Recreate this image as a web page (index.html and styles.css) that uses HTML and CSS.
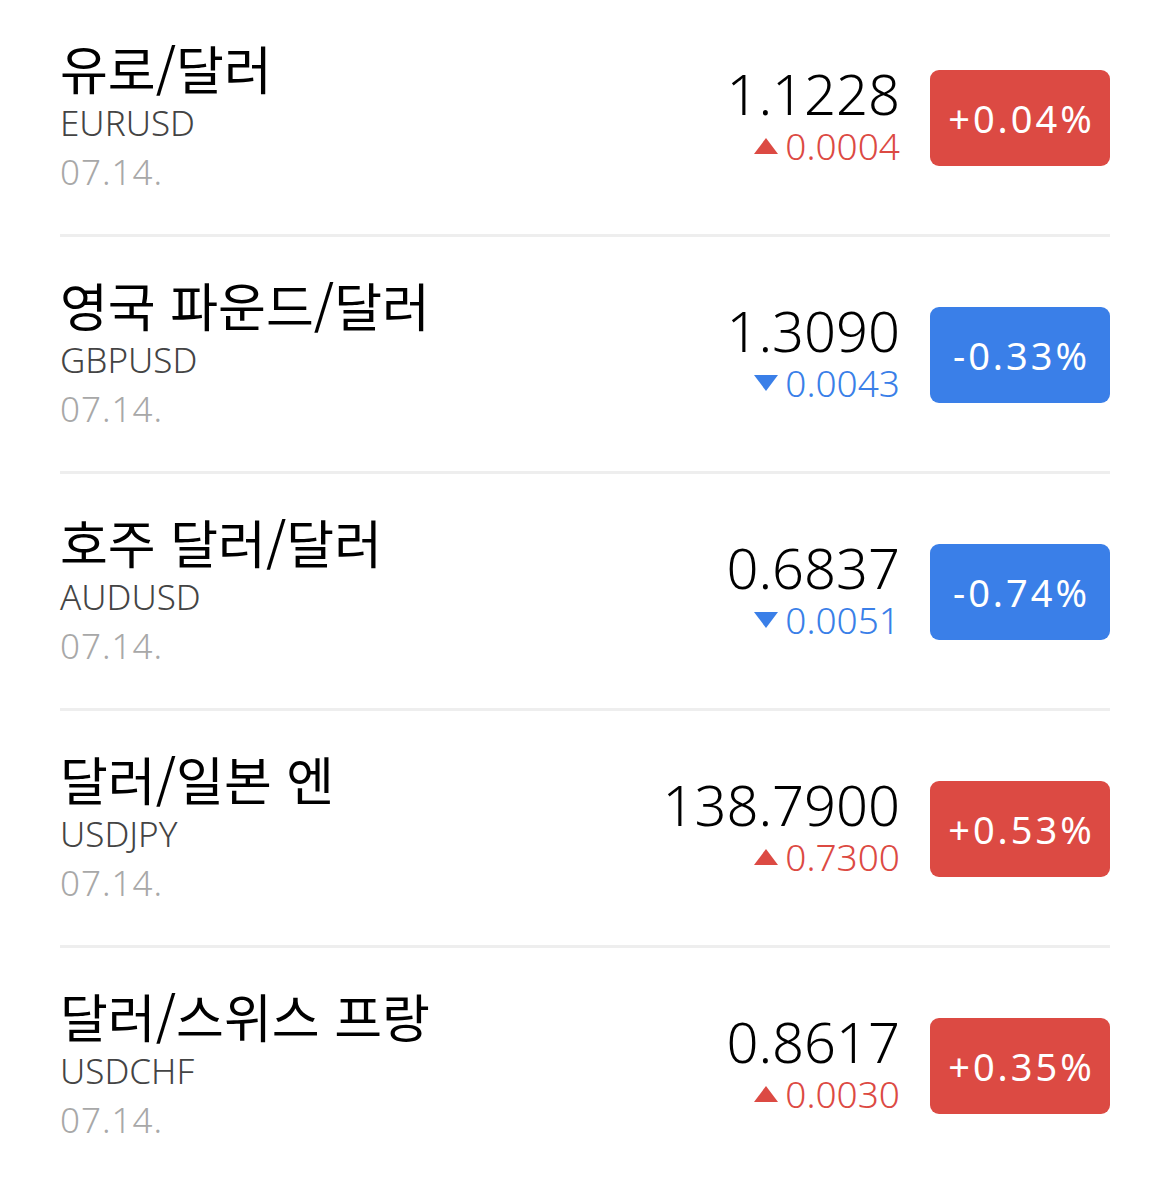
FILE: index.html
```html
<!DOCTYPE html>
<html lang="ko">
<head>
<meta charset="utf-8">
<link rel="stylesheet" href="styles.css">
</head>
<body>
<ul class="list">
  <li class="row">
    <div class="info">
      <div class="name">유로/달러</div>
      <div class="code">EURUSD</div>
      <div class="date">07.14.</div>
    </div>
    <div class="quote">
      <div class="prices">
        <div class="price">1.1228</div>
        <div class="change up"><span class="tri tri-up"></span>0.0004</div>
      </div>
      <div class="badge up-bg">+0.04%</div>
    </div>
  </li>
  <li class="row">
    <div class="info">
      <div class="name">영국 파운드/달러</div>
      <div class="code">GBPUSD</div>
      <div class="date">07.14.</div>
    </div>
    <div class="quote">
      <div class="prices">
        <div class="price">1.3090</div>
        <div class="change down"><span class="tri tri-down"></span>0.0043</div>
      </div>
      <div class="badge down-bg">-0.33%</div>
    </div>
  </li>
  <li class="row">
    <div class="info">
      <div class="name">호주 달러/달러</div>
      <div class="code">AUDUSD</div>
      <div class="date">07.14.</div>
    </div>
    <div class="quote">
      <div class="prices">
        <div class="price">0.6837</div>
        <div class="change down"><span class="tri tri-down"></span>0.0051</div>
      </div>
      <div class="badge down-bg">-0.74%</div>
    </div>
  </li>
  <li class="row">
    <div class="info">
      <div class="name">달러/일본 엔</div>
      <div class="code">USDJPY</div>
      <div class="date">07.14.</div>
    </div>
    <div class="quote">
      <div class="prices">
        <div class="price">138.7900</div>
        <div class="change up"><span class="tri tri-up"></span>0.7300</div>
      </div>
      <div class="badge up-bg">+0.53%</div>
    </div>
  </li>
  <li class="row last">
    <div class="info">
      <div class="name">달러/스위스 프랑</div>
      <div class="code">USDCHF</div>
      <div class="date">07.14.</div>
    </div>
    <div class="quote">
      <div class="prices">
        <div class="price">0.8617</div>
        <div class="change up"><span class="tri tri-up"></span>0.0030</div>
      </div>
      <div class="badge up-bg">+0.35%</div>
    </div>
  </li>
</ul>
</body>
</html>
```

FILE: styles.css
```css
html, body {
  margin: 0;
  padding: 0;
  background: #ffffff;
}
body {
  font-family: "Noto Sans", "Noto Sans CJK KR", sans-serif;
  color: #000;
}
.list {
  list-style: none;
  margin: 0;
  padding: 0 60px;
}
.row {
  display: flex;
  align-items: center;
  justify-content: space-between;
  height: 234px;
  border-bottom: 3px solid #eeeeee;
}
.row.last {
  border-bottom: none;
}
.info {
  display: flex;
  flex-direction: column;
}
.name {
  font-family: "Noto Sans CJK KR", sans-serif;
  font-size: 52px;
  line-height: 60px;
  font-weight: 400;
  color: #000;
}
.code {
  font-size: 35px;
  line-height: 50px;
  font-weight: 300;
  color: #444444;
}
.date {
  font-size: 35px;
  line-height: 48px;
  font-weight: 300;
  letter-spacing: 1px;
  color: #a8a8a8;
}
.quote {
  display: flex;
  align-items: center;
  gap: 30px;
}
.prices {
  display: flex;
  flex-direction: column;
  align-items: flex-end;
}
.price {
  font-size: 56px;
  line-height: 58px;
  font-weight: 300;
  color: #000;
}
.change {
  display: flex;
  align-items: center;
  font-size: 37px;
  line-height: 48px;
  font-weight: 300;
}
.change.up { color: #dc4a43; }
.change.down { color: #3a7fe8; }
.tri {
  width: 0;
  height: 0;
  margin-right: 7px;
  border-left: 12px solid transparent;
  border-right: 12px solid transparent;
}
.tri-up {
  border-bottom: 16px solid #dc4a43;
}
.tri-down {
  border-top: 16px solid #3a7fe8;
}
.badge {
  width: 180px;
  height: 96px;
  margin-top: 2px;
  border-radius: 9px;
  display: flex;
  align-items: center;
  justify-content: center;
  color: #fff;
  font-size: 38px;
  font-weight: 400;
  letter-spacing: 3px;
  text-indent: 3px;
}
.up-bg { background: #dc4a43; }
.down-bg { background: #3a7fe8; }
```
